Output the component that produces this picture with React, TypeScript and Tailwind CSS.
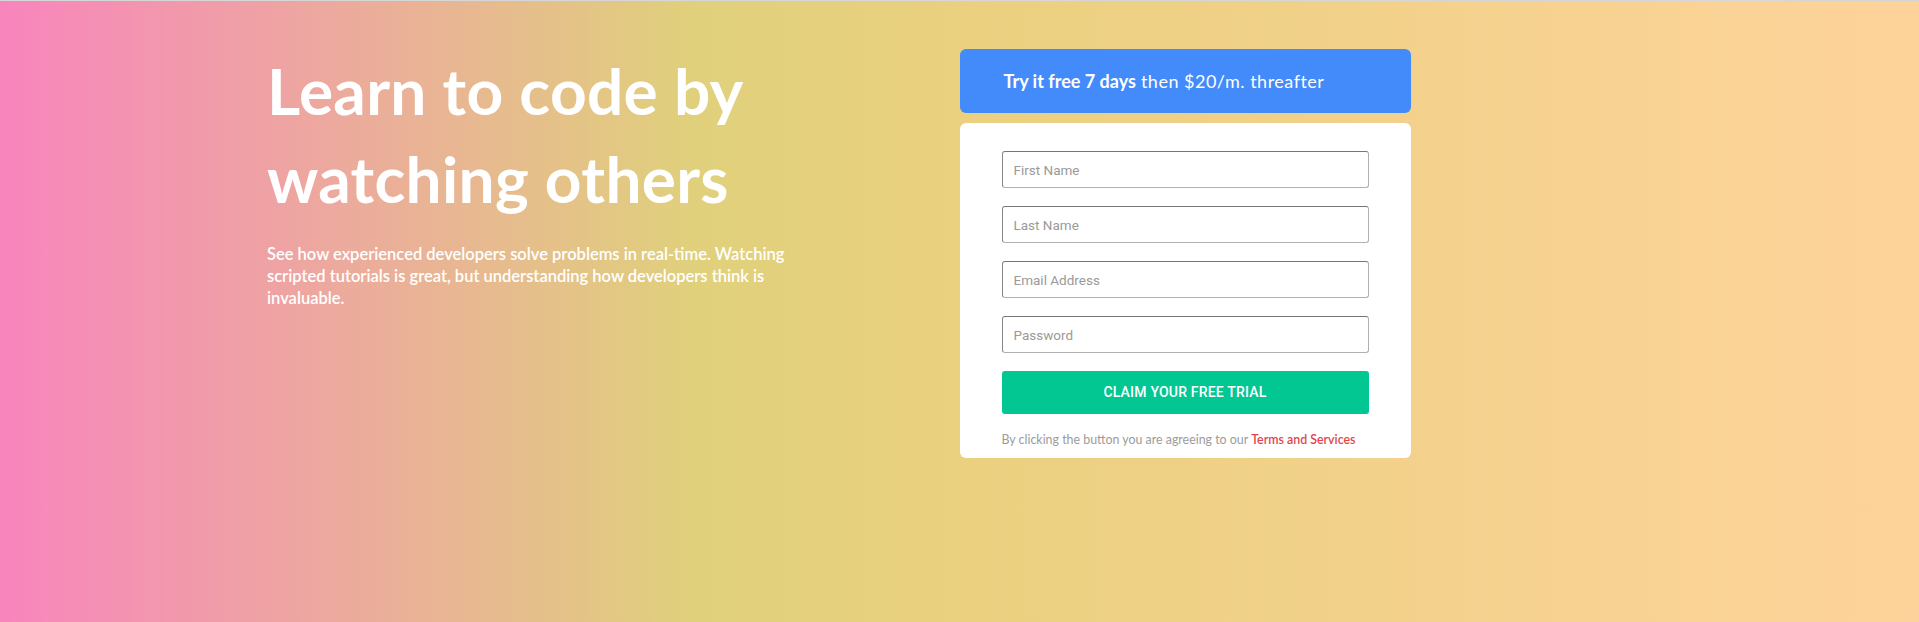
import React from 'react';

const fields = ['First Name', 'Last Name', 'Email Address', 'Password'];

export default function App() {
  return (
    <div className="min-h-[622px] border-t border-[#d6d6d6] bg-[linear-gradient(to_right,#f885bd_0%,#e0d07c_36%,#ead07f_50%,#fed39b_100%)] font-['Lato',sans-serif]">
      <div className="mx-auto grid w-[1385px] grid-cols-2 pt-[48px]">
        <div>
          <h1 className="mt-[-2px] text-[64px] leading-[88px] font-bold tracking-[0.3px] text-white">
            Learn to code by
            <br />
            watching others
          </h1>
          <p className="mt-[20px] w-[545px] text-[16.5px] leading-[22px] font-semibold text-white">
            See how experienced developers solve problems in real-time. Watching scripted tutorials is great, but
            understanding how developers think is invaluable.
          </p>
        </div>

        <div className="w-[451px]">
          <div className="flex h-[64px] items-center rounded-[6px] bg-[#438bfa] pl-[44px] text-[18px] text-white">
            <span className="font-bold">Try it free 7 days</span>
            <span className="ml-[5px] tracking-[0.5px]">then $20/m. threafter</span>
          </div>

          <form className="mt-[10px] rounded-[6px] bg-white px-[42px] pt-[28px] pb-[9px]">
            {fields.map(f => (
              <input
                key={f}
                type={f === 'Password' ? 'password' : 'text'}
                placeholder={f}
                className="mb-[18px] block h-[37px] w-full rounded-[3px] border border-t-[#767676] border-l-[#858585] border-r-[#b0b0b0] border-b-[#b0b0b0] px-[11px] font-['Roboto',sans-serif] text-[13.5px] text-[#333] placeholder:text-[#9a9a9a]"
              />
            ))}
            <button
              type="button"
              className="block h-[43px] w-full rounded-[3px] bg-[#02c793] font-['Roboto',sans-serif] text-[14px] font-medium tracking-[0.2px] text-white uppercase"
            >
              Claim your free trial
            </button>
            <p className="mt-[17px] text-[12.4px] leading-[18px] text-[#9b9b9b]">
              By clicking the button you are agreeing to our{' '}
              <a href="#" className="font-semibold text-[#e0464e]">
                Terms and Services
              </a>
            </p>
          </form>
        </div>
      </div>
    </div>
  );
}
